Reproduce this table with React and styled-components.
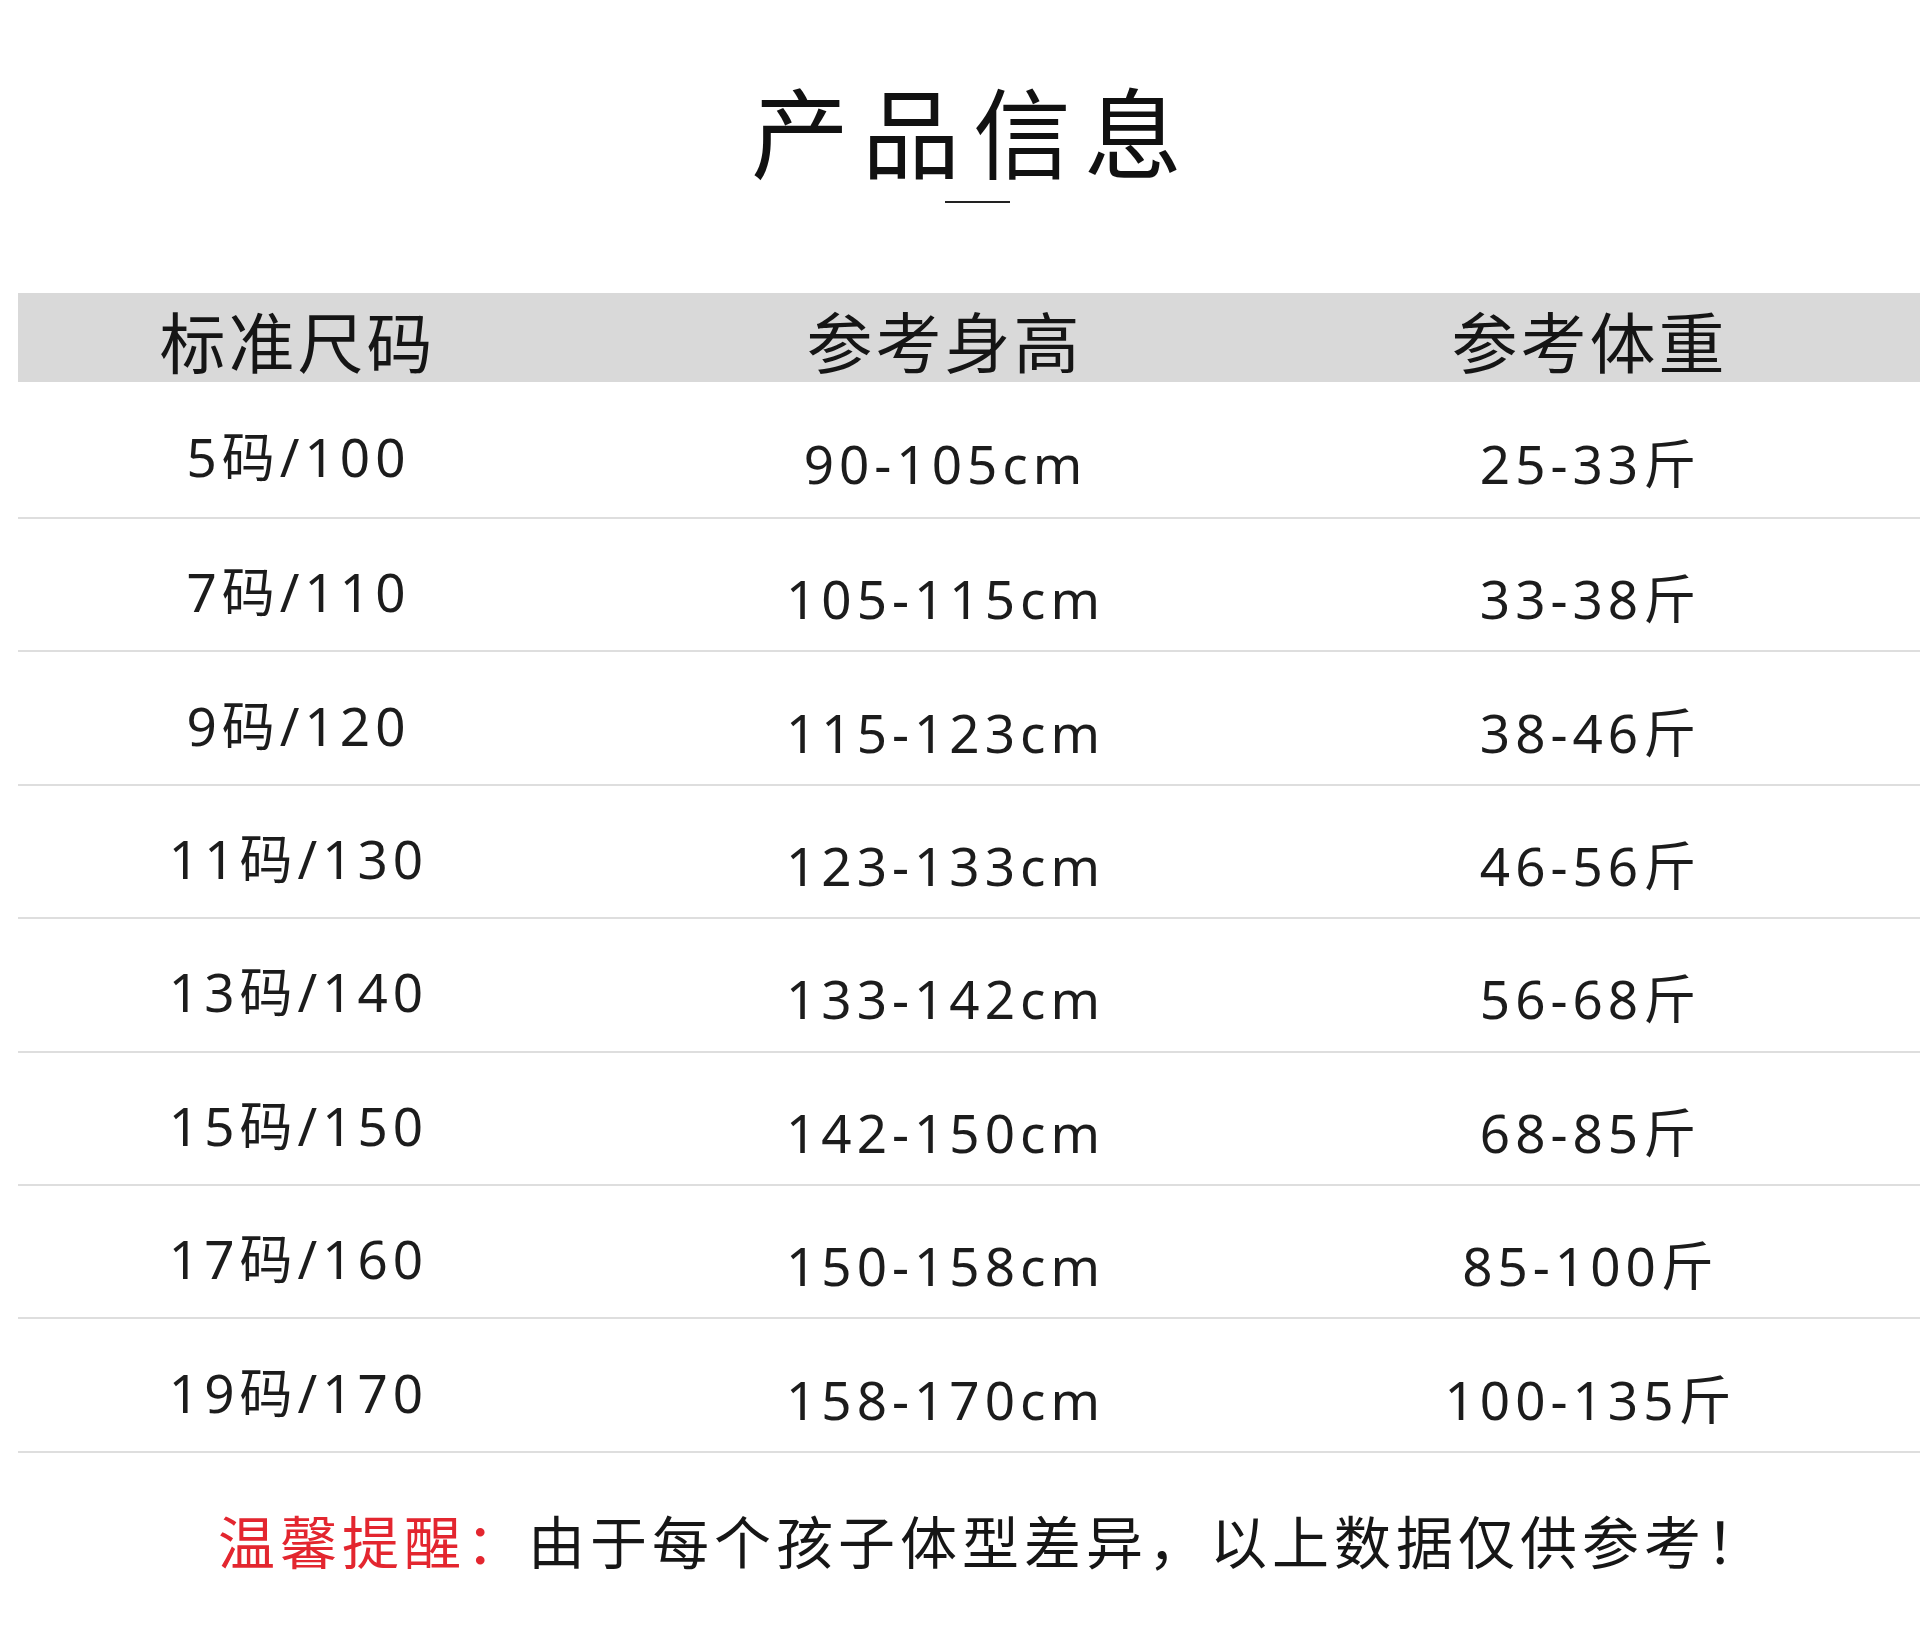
import React from 'react'
import styled, { createGlobalStyle } from 'styled-components'

const rows = [
    ['5码/100', '90-105cm', '25-33斤'],
    ['7码/110', '105-115cm', '33-38斤'],
    ['9码/120', '115-123cm', '38-46斤'],
    ['11码/130', '123-133cm', '46-56斤'],
    ['13码/140', '133-142cm', '56-68斤'],
    ['15码/150', '142-150cm', '68-85斤'],
    ['17码/160', '150-158cm', '85-100斤'],
    ['19码/170', '158-170cm', '100-135斤'],
]

const GlobalStyle = createGlobalStyle`
    body {
        margin: 0;
        background: #fff;
        font-family: "Noto Sans", "Noto Sans CJK SC", sans-serif;
    }
`

const Page = styled.div`
    width: 1920px;
    min-height: 1641px;
    background: #fff;
    padding-top: 79px;
    box-sizing: border-box;
`

const TitleBlock = styled.div`
    display: flex;
    flex-direction: column;
    align-items: center;
`

const Title = styled.h1`
    margin: 0;
    padding-left: 26px;
    font-family: "Noto Sans CJK SC", sans-serif;
    font-size: 98px;
    font-weight: 400;
    line-height: 1;
    letter-spacing: 13px;
    color: #111;
`

const Underline = styled.div`
    width: 65px;
    height: 2px;
    margin-top: 24px;
    margin-left: 34px;
    background: #222;
`

const Table = styled.div`
    margin: 90px 0 0 18px;
`

const Row = styled.div`
    display: grid;
    grid-template-columns: 556px 738px 552px 1fr;
    align-items: center;
    box-sizing: border-box;
    height: ${p => p.$h}px;
    background: ${p => (p.$head ? '#d9d9d9' : 'transparent')};
    border-bottom: ${p => (p.$head ? 'none' : '2px solid #dedede')};
`

const HeadCell = styled.div`
    padding-top: 3px;
    padding-left: 3px;
    text-align: center;
    font-family: "Noto Sans CJK SC", sans-serif;
    font-size: 66px;
    line-height: 1;
    letter-spacing: 3px;
    color: #151515;
`

const Cell = styled.div`
    padding-top: ${p => (p.$first ? '14px' : '28px')};
    padding-left: 5px;
    text-align: center;
    font-family: "Noto Sans", "Noto Sans CJK SC", sans-serif;
    font-size: 53px;
    line-height: 1;
    letter-spacing: 5px;
    color: #1c1c1c;
`

const Note = styled.p`
    margin: 58px 0 0;
    padding-left: 66px;
    text-align: center;
    font-family: "Noto Sans CJK SC", sans-serif;
    font-size: 57px;
    line-height: 1;
    letter-spacing: 5px;
    color: #161616;
`

const Warn = styled.span`
    color: #e3262f;
`

const App = () => (
    <>
        <GlobalStyle />
        <Page>
            <TitleBlock>
                <Title>产品信息</Title>
                <Underline />
            </TitleBlock>
            <Table>
                <Row $head $h={89}>
                    <HeadCell>标准尺码</HeadCell>
                    <HeadCell>参考身高</HeadCell>
                    <HeadCell>参考体重</HeadCell>
                </Row>
                {rows.map((r, i) => (
                    <Row key={r[0]} $h={i === 0 ? 137 : 133.4}>
                        <Cell $first>{r[0]}</Cell>
                        <Cell>{r[1]}</Cell>
                        <Cell>{r[2]}</Cell>
                    </Row>
                ))}
            </Table>
            <Note>
                <Warn>温馨提醒：</Warn>由于每个孩子体型差异，以上数据仅供参考！
            </Note>
        </Page>
    </>
)

export default App
